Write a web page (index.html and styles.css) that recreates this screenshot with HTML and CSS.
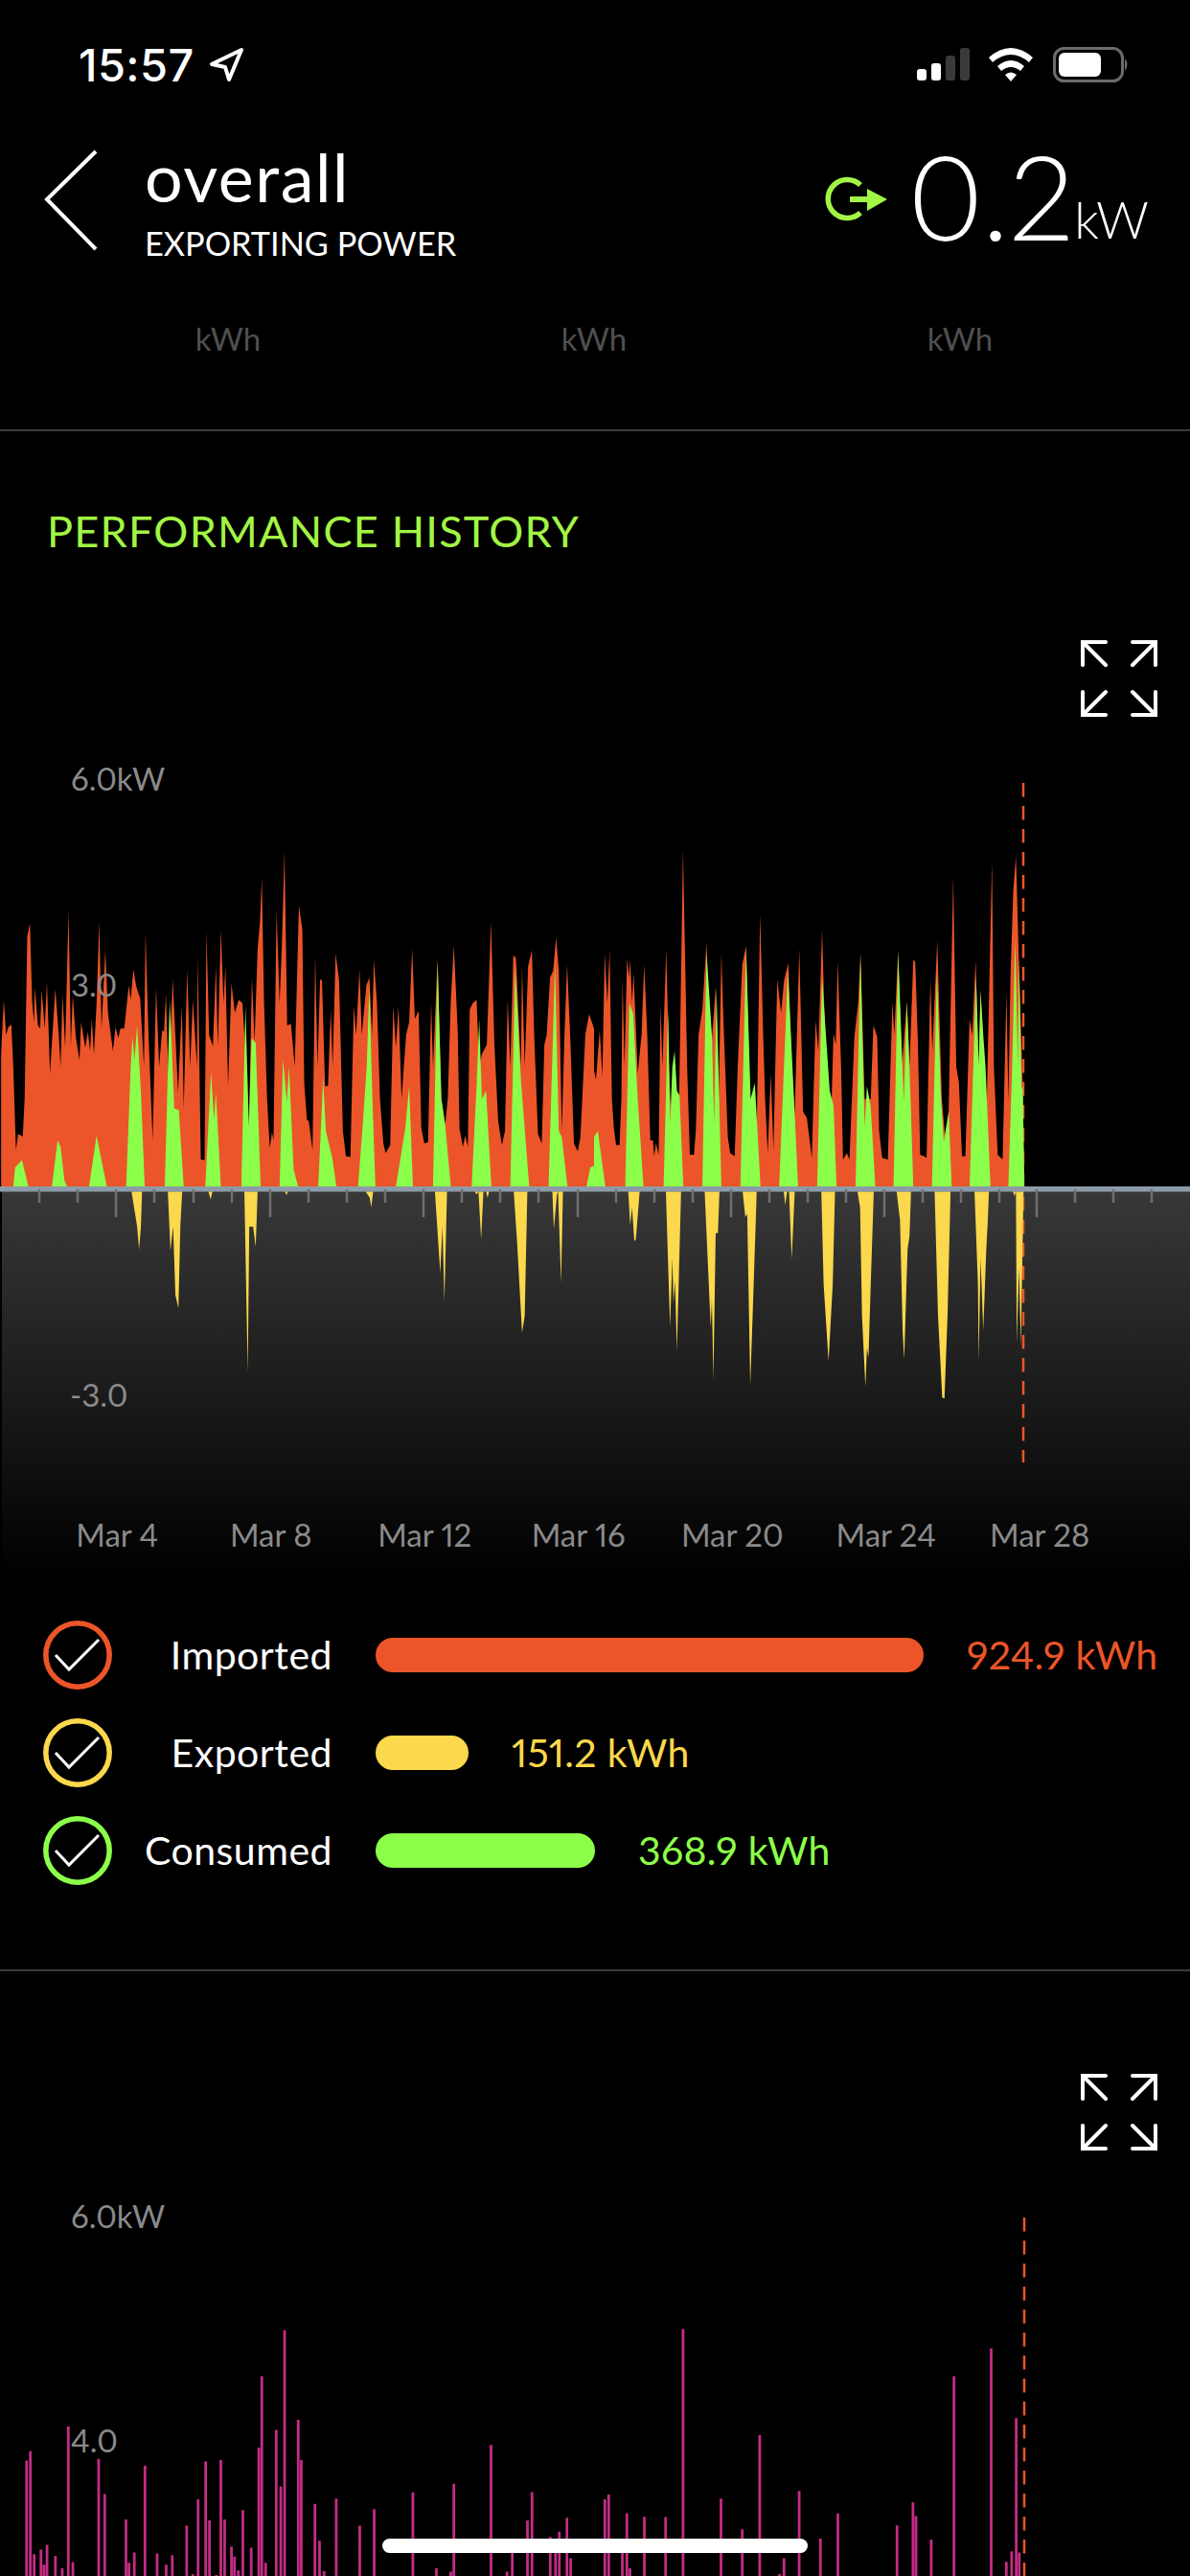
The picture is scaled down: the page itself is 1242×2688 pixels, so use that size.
FILE: index.html
```html
<!DOCTYPE html>
<html lang="en">

<head>
   <meta charset="UTF-8">
   <meta name="viewport" content="width=device-width, initial-scale=1.0">
   <title>overall</title>
   <link rel="stylesheet" href="styles.css">
</head>

<body>
   <!-- Status bar -->
   <div class="status">
      <span class="time">15:57</span>
      <svg class="locate" viewBox="218 48 40 40">
         <path d="M222 67 L253 52 L240 83 L236 70 Z" fill="none" stroke="#fff" stroke-width="4" stroke-linejoin="round" />
      </svg>
      <svg class="status-icons" viewBox="957 49 222 37">
         <rect x="957" y="72" width="10" height="12" rx="3" fill="#fff" />
         <rect x="972" y="66" width="10" height="18" rx="3" fill="#fff" />
         <rect x="987" y="58" width="10" height="26" rx="3" fill="#3a3a3a" />
         <rect x="1002" y="50" width="10" height="34" rx="3" fill="#3a3a3a" />
         <path d="M1032 60 Q1055 40 1078 60 L1074 65 Q1055 49 1036 65 Z" fill="#fff" />
         <path d="M1041 69 Q1055 57 1069 69 L1065 74 Q1055 66 1045 74 Z" fill="#fff" />
         <path d="M1049 78 Q1055 73 1061 78 L1055 85 Z" fill="#fff" />
         <rect x="1100.5" y="50.5" width="71" height="34" rx="10" fill="none" stroke="#6b6b6b" stroke-width="3" />
         <rect x="1105" y="55" width="44" height="25" rx="6" fill="#fff" />
         <path d="M1174 61 Q1179 67 1174 74 Z" fill="#6b6b6b" />
      </svg>
   </div>

   <!-- Header -->
   <div class="header">
      <svg class="back" viewBox="0 0 58 106">
         <path d="M55 2 L4 52 L55 104" fill="none" stroke="#fff" stroke-width="4" />
      </svg>
      <div class="title-block">
         <div class="title">overall</div>
         <div class="subtitle">EXPORTING POWER</div>
      </div>
      <div class="power">
         <svg class="export-icon" viewBox="856 184 70 48">
            <path d="M895 193 A20 20 0 1 0 895 222" fill="none" stroke="#a2f545" stroke-width="5.5" />
            <path d="M884 205 H902 V197 L923 208 L902 220 V211 H884 Z" fill="#a2f545" />
         </svg>
         <span class="power-value">0.2</span>
         <span class="power-unit">kW</span>
      </div>
   </div>

   <div class="totals">
      <span>kWh</span>
      <span>kWh</span>
      <span>kWh</span>
   </div>

   <hr class="divider">

   <h2 class="section-title">PERFORMANCE HISTORY</h2>

   <svg class="expand" viewBox="0 0 80 80">
      <path d="M26 2 H2 V26 M2 2 L26 26 M54 2 H78 V26 M78 2 L54 26 M2 54 V78 H26 M2 78 L26 54 M78 54 V78 H54 M78 78 L54 54" fill="none" stroke="#fff" stroke-width="4" stroke-linecap="round" />
   </svg>

   <!-- Power chart -->
   <div class="chart chart-power">
      <svg class="plot" viewBox="0 780 1242 865">
         <defs>
            <linearGradient id="below" x1="0" y1="0" x2="0" y2="1">
               <stop offset="0" stop-color="#383838" />
               <stop offset="1" stop-color="#000" />
            </linearGradient>
         </defs>
         <rect x="2" y="1243" width="1240" height="402" fill="url(#below)" />
         <line x1="1068" y1="817" x2="1068" y2="1526" stroke="#ec5529" stroke-width="2.5" stroke-dasharray="14.5 9.5" />

         <!-- left half -->
         <g transform="translate(0 780) scale(.3954 .3333)">
            <polygon fill="#ec5529" points="3,1380 3,960 10,790 16,900 22,875 30,868 35,1000 42,1260 48,1210 60,1218 65,1100 72,590 79,552 85,800 90,860 92,750 100,870 106,880 110,760 118,880 124,735 132,1020 146,755 155,900 160,1000 165,775 172,940 181,510 187,935 192,775 200,905 210,980 214,860 225,940 232,890 238,950 242,850 248,960 255,800 262,545 268,880 278,635 285,830 298,950 305,875 312,910 318,880 328,880 336,790 340,745 345,790 352,695 360,750 370,785 380,1000 384,580 392,900 403,1230 412,750 420,1000 428,885 433,890 438,770 445,1050 456,725 470,1080 480,810 485,1130 494,695 502,1000 509,790 520,1000 522,650 530,1290 540,1292 545,575 552,900 562,935 570,685 575,935 583,570 590,800 595,685 602,1060 611,738 620,830 630,790 640,800 650,1000 657,1190 665,720 672,920 680,630 686,550 691,410 697,800 705,1100 712,1255 718,1205 722,1230 730,510 738,800 744,625 751,325 758,870 768,865 778,1000 789,495 798,570 803,1050 810,1165 815,1170 825,1260 832,650 838,1000 845,725 850,730 858,1060 866,1060 873,820 878,1000 886,645 895,730 905,1200 913,1280 925,1282 934,810 940,900 949,695 955,900 967,745 975,720 982,900 987,665 995,800 1003,1100 1012,1240 1018,1270 1030,1245 1038,810 1045,940 1052,810 1060,1100 1066,1000 1072,900 1080,860 1088,630 1095,850 1105,825 1112,1190 1120,1240 1130,1235 1138,800 1143,1000 1155,660 1165,1100 1175,1180 1182,1100 1190,790 1198,620 1208,880 1213,1195 1222,1250 1228,1215 1235,1250 1240,820 1248,800 1258,790 1265,1000 1272,960 1285,930 1296,545 1305,930 1315,1170 1325,1245 1333,1200 1340,790 1347,1000 1355,650 1362,660 1375,1000 1378,685 1385,1000 1394,685 1404,635 1410,900 1420,1210 1430,1240 1437,930 1443,900 1452,720 1460,700 1468,595 1475,700 1483,1200 1490,900 1497,680 1505,900 1515,1240 1525,1265 1532,1220 1545,900 1555,835 1568,880 1568,1380" />
            <path fill="#8cff4a" d="M35 1375 L40 1315 L58 1292 L75 1375 Z
               M137 1375 L152 1230 L160 1250 L170 1355 L177 1375 Z
               M235 1375 L255 1215 L282 1375 Z
               M333 1375 L345 1000 L350 905 L355 980 L362 870 L372 1080 L382 1375 Z
               M435 1375 L448 790 L460 1130 L472 1135 L485 1375 Z
               M542 1375 L557 1015 L565 1165 L570 1080 L583 1375 Z
               M637 1375 L648 810 L657 1190 L664 910 L675 925 L688 1375 Z
               M738 1375 L747 975 L757 1110 L763 1000 L775 1320 L787 1375 Z
               M840 1375 L853 1035 L860 1200 L878 1290 L888 1375 Z
               M945 1375 L957 1190 L968 1000 L975 750 L983 1100 L991 1375 Z
               M1045 1375 L1070 1190 L1080 1060 L1090 1375 Z
               M1143 1375 L1155 670 L1165 1100 L1175 1180 L1190 1375 Z
               M1245 1375 L1258 1060 L1265 850 L1272 1100 L1283 1075 L1297 1375 Z
               M1347 1375 L1360 690 L1375 1040 L1397 1375 Z
               M1448 1375 L1465 680 L1475 1200 L1483 1220 L1498 1375 Z
               M1548 1375 L1558 1315 L1568 1310 L1568 1375 Z" />
            <path fill="#fbd84c" d="M347 1390 L362 1500 L367 1572 L372 1500 L375 1390 Z
               M443 1390 L450 1575 L457 1500 L463 1715 L471 1756 L476 1500 L481 1390 Z
               M550 1390 L556 1415 L561 1390 Z
               M645 1390 L654 1957 L658 1500 L668 1500 L675 1563 L680 1390 Z
               M752 1390 L756 1402 L760 1390 Z
               M965 1390 L976 1410 L980 1440 L985 1390 Z
               M1148 1390 L1162 1645 L1168 1500 L1173 1735 L1180 1390 Z
               M1253 1390 L1258 1400 L1263 1390 L1270 1540 L1276 1390 Z
               M1283 1390 L1287 1410 L1291 1390 Z
               M1356 1390 L1365 1550 L1378 1832 L1385 1780 L1392 1390 Z
               M1458 1390 L1462 1508 L1470 1400 L1473 1390 L1481 1675 L1486 1390 Z" />
         </g>

         <!-- right half -->
         <g transform="translate(620 780) scale(.3967 .3333)">
            <polygon fill="#ec5529" points="0,1380 0,1010 5,1040 15,885 22,1030 28,645 35,800 41,635 47,1100 52,1190 58,1245 67,1245 72,1100 75,720 80,1000 87,660 92,720 95,665 100,800 104,705 115,1020 125,900 132,680 140,900 148,1230 155,1230 158,1280 163,1240 170,1275 175,805 180,1000 190,630 197,1000 205,1200 222,1250 234,320 245,1000 252,1275 263,1275 268,1195 275,900 285,820 296,610 305,1000 320,750 328,1100 335,645 340,840 345,1000 352,1220 358,1270 370,1280 378,1000 390,680 400,620 410,1100 428,1200 437,520 445,900 450,1100 457,1270 465,1020 472,1260 482,725 488,790 492,830 500,730 511,675 520,1000 528,1150 540,630 550,1140 560,1160 573,1285 583,855 590,950 600,570 610,1000 623,1200 630,895 636,930 641,670 650,1000 655,1290 665,1270 672,1290 685,905 695,800 701,645 712,1100 728,1100 735,870 745,905 750,1200 758,1285 773,1290 785,795 790,900 800,635 810,1000 823,795 830,1000 840,665 845,670 852,920 858,1275 868,1280 875,1285 885,725 890,950 903,605 915,1100 925,1240 933,1140 945,405 953,1000 960,1050 968,1280 977,1280 988,850 995,900 1004,665 1012,1000 1017,760 1025,1000 1032,1180 1047,355 1052,1000 1062,1275 1075,1290 1085,765 1090,1110 1096,700 1103,450 1110,340 1118,680 1128,1060 1132,1380" />
            <path fill="#8cff4a" d="M0 1375 L0 1220 L10 1200 L15 1245 L30 1375 Z
               M82 1375 L93 800 L103 835 L115 1100 L130 1375 Z
               M183 1375 L195 820 L200 1180 L206 1000 L212 950 L218 1075 L225 1090 L235 1375 Z
               M285 1375 L296 640 L310 900 L316 1180 L322 750 L335 1375 Z
               M385 1375 L400 630 L412 1100 L423 1050 L438 1375 Z
               M487 1375 L510 700 L520 950 L537 1375 Z
               M587 1375 L600 720 L620 1075 L630 1120 L638 1375 Z
               M688 1375 L701 650 L712 1190 L718 1060 L728 1125 L740 1375 Z
               M788 1375 L800 640 L815 1110 L823 795 L830 1000 L840 1375 Z
               M889 1375 L902 700 L912 1080 L920 1235 L933 1140 L941 1375 Z
               M988 1375 L1005 720 L1012 1000 L1017 760 L1024 900 L1030 1000 L1043 1375 Z
               M1090 1375 L1100 1000 L1108 600 L1115 1000 L1118 660 L1125 1070 L1128 1060 L1132 1375 Z" />
         </g>
         <g transform="translate(620 1240) scale(.3967 .3333)">
            <path fill="#fbd84c" d="M90 10 L95 115 L100 60 L106 165 L110 160 L120 10 Z
               M189 10 L200 435 L206 220 L209 360 L213 290 L218 510 L229 10 Z
               M291 10 L307 435 L310 350 L314 600 L320 140 L326 140 L330 10 Z
               M391 10 L398 90 L403 80 L411 618 L420 300 L428 10 Z
               M499 10 L503 52 L508 10 Z
               M513 10 L520 222 L528 10 Z
               M598 10 L604 300 L617 542 L628 300 L634 10 Z
               M693 10 L700 60 L705 400 L714 622 L718 500 L722 530 L728 300 L736 10 Z
               M796 10 L805 100 L812 450 L816 536 L822 300 L825 190 L830 150 L834 10 Z
               M896 10 L905 400 L916 655 L922 658 L930 400 L938 10 Z
               M1001 10 L1010 300 L1012 540 L1017 220 L1024 445 L1032 190 L1036 100 L1039 10 Z
               M1102 10 L1106 25 L1110 10 L1112 485 L1118 250 L1123 495 L1130 10 Z" />
         </g>

         <rect x="0" y="1238" width="1242" height="5.5" fill="#8c9ba8" />
         <path class="ticks" d="M41 1241 V1255 M81 1241 V1255 M121 1241 V1270 M161 1241 V1255 M202 1241 V1255 M242 1241 V1255 M282 1241 V1270 M322 1241 V1255 M362 1241 V1255 M402 1241 V1255 M442 1241 V1270 M482 1241 V1255 M522 1241 V1255 M562 1241 V1255 M603 1241 V1270 M643 1241 V1255 M683 1241 V1255 M723 1241 V1255 M763 1241 V1270 M803 1241 V1255 M843 1241 V1255 M883 1241 V1255 M923 1241 V1270 M963 1241 V1255 M1003 1241 V1255 M1043 1241 V1255 M1082 1241 V1270 M1122 1241 V1255 M1162 1241 V1255 M1202 1241 V1255" />
      </svg>
      <span class="y-label y-top">6.0kW</span>
      <span class="y-label y-mid">3.0</span>
      <span class="y-label y-low">-3.0</span>
      <div class="x-labels">
         <span>Mar 4</span>
         <span>Mar 8</span>
         <span>Mar 12</span>
         <span>Mar 16</span>
         <span>Mar 20</span>
         <span>Mar 24</span>
         <span>Mar 28</span>
      </div>
   </div>

   <!-- Legend -->
   <div class="legend">
      <div class="legend-row imported">
         <svg class="check" viewBox="0 0 72 72">
            <circle cx="36" cy="36" r="33.2" />
            <path d="M13 36 L27 51 L58 20" />
         </svg>
         <span class="legend-label">Imported</span>
         <span class="bar bar-imported"></span>
         <span class="legend-value">924.9 kWh</span>
      </div>
      <div class="legend-row exported">
         <svg class="check" viewBox="0 0 72 72">
            <circle cx="36" cy="36" r="33.2" />
            <path d="M13 36 L27 51 L58 20" />
         </svg>
         <span class="legend-label">Exported</span>
         <span class="bar bar-exported"></span>
         <span class="legend-value">151.2 kWh</span>
      </div>
      <div class="legend-row consumed">
         <svg class="check" viewBox="0 0 72 72">
            <circle cx="36" cy="36" r="33.2" />
            <path d="M13 36 L27 51 L58 20" />
         </svg>
         <span class="legend-label">Consumed</span>
         <span class="bar bar-consumed"></span>
         <span class="legend-value">368.9 kWh</span>
      </div>
   </div>

   <hr class="divider divider-second">

   <svg class="expand expand-second" viewBox="0 0 80 80">
      <path d="M26 2 H2 V26 M2 2 L26 26 M54 2 H78 V26 M78 2 L54 26 M2 54 V78 H26 M2 78 L26 54 M78 54 V78 H54 M78 78 L54 54" fill="none" stroke="#fff" stroke-width="4" stroke-linecap="round" />
   </svg>

   <!-- Second chart, cut off by the bottom of the screen -->
   <div class="chart chart-second">
      <svg class="plot" viewBox="0 2290 1242 398">
         <line x1="1069" y1="2314" x2="1069" y2="2688" stroke="#ec5529" stroke-width="2.5" stroke-dasharray="14.5 9.5" />
         <g transform="translate(0 2120) scale(.7921 .3623)">
            <path class="spikes" d="M35 1568 V1235 M40 1568 V1208 M45 1568 V1505 M54 1568 V1492 M58 1568 V1535 M62 1568 V1478 M73 1568 V1510 M82 1568 V1545 M90 1568 V1137 M96 1568 V1528 M130 1568 V1230 M138 1568 V1332 M166 1568 V1405 M170 1568 V1530 M177 1568 V1500 M191 1568 V1250 M207 1568 V1503 M219 1568 V1535 M227 1568 V1508 M246 1568 V1423 M254 1568 V1562 M261 1568 V1347 M271 1568 V1238 M276 1568 V1408 M285 1568 V1565 M291 1568 V1234 M296 1568 V1405 M305 1568 V1483 M309 1568 V1512 M314 1568 V1552 M320 1568 V1378 M331 1568 V1486 M341 1568 V1198 M345 1568 V992 M350 1568 V1530 M364 1568 V1147 M370 1568 V1310 M375 1568 V860 M393 1568 V1118 M397 1568 V1234 M415 1568 V1360 M421 1568 V1466 M427 1568 V1554 M443 1568 V1345 M474 1568 V1423 M493 1568 V1375 M544 1568 V1327 M575 1568 V1545 M594 1568 V1555 M598 1568 V1302 M647 1568 V1190 M668 1568 V1555 M675 1568 V1500 M695 1568 V1408 M701 1568 V1326 M725 1568 V1455 M732 1568 V1500 M737 1568 V1440 M747 1568 V1400 M752 1568 V1517 M797 1568 V1347 M802 1568 V1333 M820 1568 V1500 M826 1568 V1387 M830 1568 V1546 M849 1568 V1397 M877 1568 V1398 M900 1568 V856 M950 1568 V1345 M978 1568 V1433 M1001 1568 V1162 M1027 1568 V1562 M1033 1568 V1517 M1053 1568 V1323 M1081 1568 V1460 M1104 1568 V1388 M1182 1568 V1422 M1203 1568 V1355 M1207 1568 V1395 M1227 1568 V1463 M1257 1568 V992 M1306 1568 V912 M1326 1568 V1527 M1333 1568 V1497 M1339 1568 V1113 M1343 1568 V1500" />
         </g>
      </svg>
      <span class="y-label second-top">6.0kW</span>
      <span class="y-label second-mid">4.0</span>
   </div>

   <div class="home-bar"></div>
</body>

</html>
```
FILE: styles.css
```css
/* General page */
html,
body {
   margin: 0;
   padding: 0;
}

body {
   position: relative;
   width: 1242px;
   height: 2688px;
   overflow: hidden;
   background-color: #000;
   color: #fff;
   font-family: Lato, "Open Sans", sans-serif;
   font-variant-numeric: proportional-nums;
}

svg {
   display: block;
}

/* Status bar */
.status {
   display: flex;
   align-items: flex-start;
   height: 136px;
   padding-top: 49px;
   padding-left: 82px;
   box-sizing: border-box;
}

.time {
   font-family: Inter, sans-serif;
   font-size: 47px;
   font-weight: 500;
   line-height: 37px;
   letter-spacing: 0.4px;
}

.locate {
   width: 40px;
   height: 40px;
   margin-left: 14px;
   margin-top: -1px;
}

.status-icons {
   width: 222px;
   height: 37px;
   margin-left: auto;
   margin-right: 63px;
}

/* Header */
.header {
   display: flex;
   height: 144px;
}

.back {
   width: 58px;
   height: 106px;
   margin-left: 45px;
   margin-top: 20px;
}

.title-block {
   margin-left: 48px;
}

.title {
   font-size: 70px;
   line-height: 84px;
   margin-top: 6px;
   letter-spacing: 1.5px;
}

.subtitle {
   font-size: 34.3px;
   line-height: 40px;
   margin-top: 8px;
}

.power {
   display: flex;
   align-items: flex-start;
   margin-left: auto;
   margin-right: 45px;
}

.export-icon {
   width: 70px;
   height: 48px;
   margin-top: 48px;
   margin-right: 18px;
}

.power-value {
   font-size: 122px;
   font-weight: 300;
   line-height: 146px;
   margin-top: -5px;
}

.power-unit {
   font-size: 54px;
   font-weight: 300;
   line-height: 70px;
   letter-spacing: -2px;
   margin-top: 58px;
}

.totals {
   display: grid;
   grid-template-columns: repeat(3, 382px);
   padding-left: 47px;
   height: 168px;
   color: #4f4f4f;
   font-size: 33px;
   line-height: 42px;
   text-align: center;
   padding-top: 52px;
   box-sizing: border-box;
}

.divider {
   height: 2px;
   margin: 0;
   border: none;
   background-color: #3a3a3a;
}

.section-title {
   margin: 77px 0 0 49px;
   font-size: 45px;
   font-weight: 400;
   line-height: 54px;
   letter-spacing: 1.25px;
   color: #a2f545;
}

.expand {
   width: 80px;
   height: 80px;
   margin: 87px 0 0 1128px;
}

/* Charts */
.chart {
   position: relative;
}

.chart-power {
   margin-top: 32px;
   height: 865px;
}

.chart-second {
   margin-top: 46px;
   height: 398px;
}

.plot {
   width: 1242px;
   height: 100%;
}

.ticks {
   fill: none;
   stroke: #6f6f6f;
   stroke-width: 2.5;
}

.spikes {
   fill: none;
   stroke: #c52c85;
   stroke-width: 3.5;
}

.y-label {
   position: absolute;
   left: 74px;
   font-size: 33px;
   line-height: 40px;
   color: #8a8a8a;
}

.y-top {
   top: 12px;
}

.y-mid {
   top: 227px;
}

.y-low {
   left: 73px;
   top: 655px;
}

.second-top {
   top: 2px;
}

.second-mid {
   top: 236px;
}

.x-labels {
   position: absolute;
   left: 42px;
   top: 801px;
   display: flex;
   color: #8a8a8a;
   font-size: 33px;
   line-height: 40px;
}

.x-labels span {
   width: 160.5px;
   text-align: center;
}

/* Legend */
.legend {
   margin-top: 31px;
}

.legend-row {
   display: flex;
   align-items: center;
   height: 102px;
   padding-left: 45px;
}

.check {
   width: 72px;
   height: 72px;
   flex-shrink: 0;
   fill: none;
}

.check circle {
   stroke-width: 5.5;
}

.check path {
   stroke: #fff;
   stroke-width: 3;
}

.imported .check circle {
   stroke: #ec5529;
}

.exported .check circle {
   stroke: #fbd84c;
}

.consumed .check circle {
   stroke: #8cff4a;
}

.legend-label {
   width: 230px;
   margin-top: -2px;
   font-size: 41px;
   letter-spacing: 0.5px;
   text-align: right;
}

.bar {
   height: 36px;
   margin-left: 45px;
   border-radius: 18px;
}

.bar-imported {
   width: 572px;
   background-color: #ec5529;
}

.bar-exported {
   width: 97px;
   background-color: #fbd84c;
}

.bar-consumed {
   width: 229px;
   background-color: #8cff4a;
}

.legend-value {
   margin-top: -2px;
   margin-left: 45px;
   font-size: 41px;
   letter-spacing: 0.3px;
}

.imported .legend-value {
   color: #ec5529;
}

.exported .legend-value {
   color: #fbd84c;
}

.consumed .legend-value {
   color: #8cff4a;
}

.divider-second {
   margin-top: 73px;
}

.expand-second {
   margin-top: 107px;
}

/* Home indicator */
.home-bar {
   position: absolute;
   left: 399px;
   top: 2649px;
   width: 444px;
   height: 15px;
   border-radius: 8px;
   background-color: #fff;
}
```
